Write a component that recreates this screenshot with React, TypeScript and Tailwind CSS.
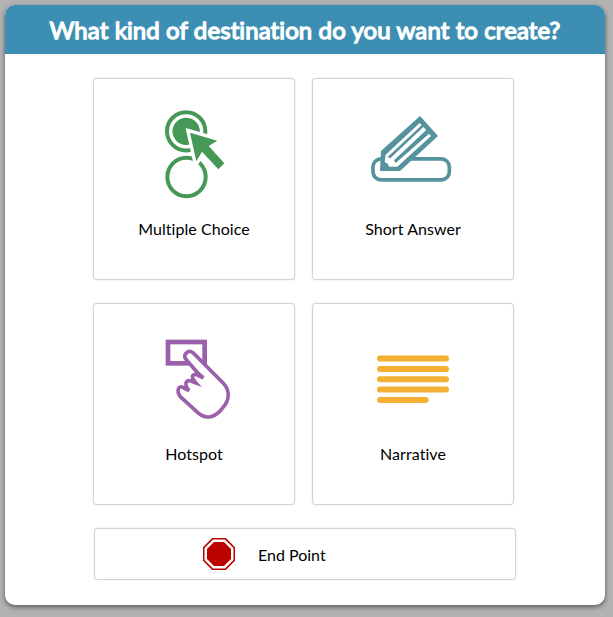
import type { ReactNode } from "react";

const shadow = "shadow-[0_0_2px_rgba(0,0,0,0.65)]";

function MultipleChoiceIcon() {
  return (
    <svg className="size-[100px]" viewBox="-18 0 300 300">
      <g fill="none" stroke="#469857" strokeWidth="12">
        <circle cx="108.5" cy="94" r="57.500" />
        <circle cx="109.5" cy="231" r="57.500" />
      </g>
      <circle cx="108.5" cy="94" r="41" fill="#469857" />
      <path d="M120 98 202 122 176 138 223 190 205 208 156 155 139 184Z" fill="#469857" stroke="#fff" strokeWidth="20" strokeMiterlimit="10" paintOrder="stroke" />
    </svg>
  );
}

function ShortAnswerIcon() {
  return (
    <svg className="size-[100px]" viewBox="9 -15 300 300">
      <rect x="39" y="161.500" width="229" height="63" rx="24" fill="none" stroke="#54929c" strokeWidth="11" />
      <path d="M180 33 234 93 120 198 60 198 63 138Z" fill="#54929c" />
      <path d="M179 54 185 61 83 156 91 160 190 66 199 75 102 166 107 174 207 86 213 93 120 178 112 185 88 185 83 176 74 171 77 149Z" fill="#fff" />
    </svg>
  );
}

function HotspotIcon() {
  return (
    <svg className="size-[100px]" viewBox="-18 -15 300 300">
      <rect x="54" y="36" width="110" height="64" fill="none" stroke="#9b5fac" strokeWidth="14" />
      <path
        d="M160 143 Q146 132 138 123 L107 87 C98 73 114 58 129 68 L220 160 C241 182 239 212 217 235 C195 263 168 269 146 250 L91 200 C77 180 88 165 98 172 L117 182 Q104 165 109 156 C116 146 126 155 138 159 Q122 141 130 135 C137 130 146 138 160 143Z"
        fill="#fff"
        stroke="#9b5fac"
        strokeWidth="11"
        strokeLinejoin="miter"
      />
    </svg>
  );
}

function NarrativeIcon() {
  return (
    <svg className="size-[100px]" viewBox="-6 -60 300 300">
      <path d="M45 40.500H243M45 72H243M45 102.500H243M45 133.500H243M45 165H182" fill="none" stroke="#f3b033" strokeWidth="18" strokeLinecap="round" />
    </svg>
  );
}

function StopIcon() {
  return (
    <svg className="size-8" viewBox="0 0 96 96">
      <path d="M29 2H67L94 29V67L67 94H29L2 67V29Z" fill="#fff" stroke="#b90000" strokeWidth="5" />
      <path d="M33 12H63L84 33V63L63 84H33L12 63V33Z" fill="#bb0000" />
    </svg>
  );
}

function Card({ label, children }: { label: string; children: ReactNode }) {
  return (
    <button className={`flex size-[200px] flex-col items-center rounded-[2px] bg-white pt-[21px] ${shadow}`}>
      {children}
      <span className="mt-[17px] text-base leading-6 tracking-[0.05px]">{label}</span>
    </button>
  );
}

export default function App() {
  return (
    <div className="h-[617px] w-[613px] bg-[#b2b2b2] p-[5px] font-['Lato',sans-serif] text-black [font-variant-ligatures:none]">
      <main className="size-[600px] overflow-hidden rounded-[10px] bg-white shadow-[0_2px_5px_rgba(0,0,0,0.5)]">
        <h1 className="h-[49px] bg-[#3c8fb3] text-center text-[24px] leading-[50px] font-normal tracking-[0.1px] text-white [-webkit-text-stroke:1.3px_white]">
          What kind of destination do you want to create?
        </h1>
        <div className="grid grid-cols-[200px_200px] gap-x-[19px] gap-y-[25px] pt-[25px] pl-[89px]">
          <Card label="Multiple Choice"><MultipleChoiceIcon /></Card>
          <Card label="Short Answer"><ShortAnswerIcon /></Card>
          <Card label="Hotspot"><HotspotIcon /></Card>
          <Card label="Narrative"><NarrativeIcon /></Card>
        </div>
        <button className={`mt-[25px] ml-[90px] flex h-[50px] w-[420px] items-center gap-[23px] rounded-[2px] pl-[108px] ${shadow}`}>
          <StopIcon />
          <span className="pt-px text-base leading-6">End Point</span>
        </button>
      </main>
    </div>
  );
}
